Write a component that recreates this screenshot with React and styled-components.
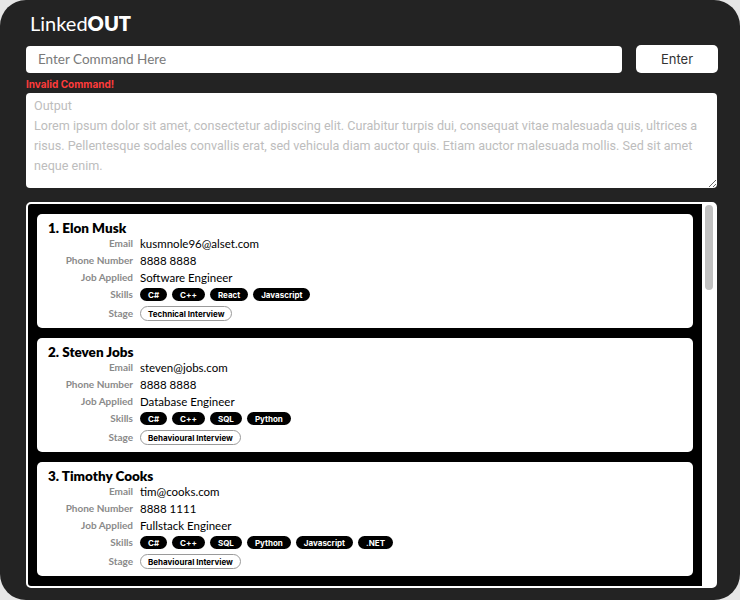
import React from 'react';
import styled, { createGlobalStyle } from 'styled-components';

const GlobalStyle = createGlobalStyle`
  html, body {
    margin: 0;
    padding: 0;
    background: #e6e6e6;
  }
  * {
    box-sizing: border-box;
  }
`;

const Window = styled.div`
  width: 740px;
  height: 600px;
  background-color: #232323;
  border-radius: 26px;
  padding: 12px 22px 12px 26px;
  display: flex;
  flex-direction: column;
  font-family: Lato, "Liberation Sans", sans-serif;
`;

const Title = styled.h1`
  margin: 0 0 11px 4px;
  font-size: 20px;
  line-height: 22px;
  font-weight: 400;
  color: #fff;
  b {
    font-weight: 800;
  }
`;

const CommandRow = styled.div`
  display: flex;
  gap: 14px;
  align-items: center;
`;

const CommandInput = styled.input`
  flex: 1;
  height: 27px;
  border: none;
  border-radius: 4px;
  padding: 0 12px;
  font-family: Lato, sans-serif;
  font-size: 13.5px;
  outline: none;
  &::placeholder {
    color: #7a7a7a;
  }
`;

const EnterButton = styled.button`
  width: 82px;
  height: 28px;
  border: none;
  border-radius: 5px;
  background: #fff;
  color: #333;
  font-family: Inter, sans-serif;
  font-size: 13px;
  cursor: pointer;
`;

const ErrorText = styled.div`
  color: #ff3b3b;
  font-family: Inter, sans-serif;
  font-weight: 700;
  font-size: 10px;
  line-height: 14px;
  margin: 4px 0 2px;
`;

const Output = styled.textarea`
  height: 95px;
  width: 691px;
  border: none;
  border-radius: 4px;
  padding: 3px 4px 3px 8px;
  font-family: Roboto, sans-serif;
  font-size: 12.6px;
  line-height: 20px;
  resize: vertical;
  outline: none;
  &::placeholder {
    color: #bdbdbd;
  }
`;

const ListFrame = styled.div`
  margin-top: 14px;
  flex: 1;
  width: 691px;
  min-height: 0;
  display: flex;
  border: 2px solid #fff;
  border-radius: 5px;
  background: #fff;
  overflow: hidden;
`;

const Viewport = styled.div`
  flex: 1;
  background: #000;
  overflow: hidden;
`;

const ScrollTrack = styled.div`
  width: 13px;
  padding: 1px 2px 0 3px;
  background: #fff;
`;

const ScrollThumb = styled.div`
  height: 85px;
  border-radius: 4px;
  background: #c1c1c1;
`;

const List = styled.div`
  display: flex;
  flex-direction: column;
  gap: 10px;
  padding: 10px 9px;
`;

const Card = styled.div`
  background: #fff;
  border-radius: 5px;
  padding: 6px 11px 7px;
`;

const Name = styled.div`
  font-weight: 800;
  font-size: 13.5px;
  line-height: 16px;
  color: #000;
`;

const Fields = styled.div`
  display: grid;
  grid-template-columns: 85px 1fr;
  column-gap: 7px;
  row-gap: 2px;
`;

const Label = styled.div`
  text-align: right;
  color: #8a8a8a;
  font-weight: 700;
  font-size: 10px;
  line-height: 15px;
  margin-top: ${p => (p.$extra ? '2px' : '0')};
`;

const Value = styled.div`
  font-size: 11.5px;
  line-height: 15px;
  color: #000;
`;

const Chips = styled.div`
  display: flex;
  gap: 5px;
  align-items: center;
  height: 15px;
  margin-top: ${p => (p.$extra ? '2px' : '0')};
`;

const Chip = styled.span`
  display: inline-flex;
  align-items: center;
  height: ${p => (p.$outline ? '15px' : '13px')};
  padding: 0 ${p => (p.$outline ? '7px' : '8px')};
  border-radius: 8px;
  font-family: Inter, sans-serif;
  font-weight: 700;
  font-size: 8px;
  background: ${p => (p.$outline ? '#fff' : '#000')};
  color: ${p => (p.$outline ? '#000' : '#fff')};
  border: ${p => (p.$outline ? '1px solid #9a9a9a' : 'none')};
`;

const applicants = [
  { name: 'Elon Musk', email: 'kusmnole96@alset.com', phone: '8888 8888', job: 'Software Engineer', skills: ['C#', 'C++', 'React', 'Javascript'], stage: 'Technical Interview' },
  { name: 'Steven Jobs', email: 'steven@jobs.com', phone: '8888 8888', job: 'Database Engineer', skills: ['C#', 'C++', 'SQL', 'Python'], stage: 'Behavioural Interview' },
  { name: 'Timothy Cooks', email: 'tim@cooks.com', phone: '8888 1111', job: 'Fullstack Engineer', skills: ['C#', 'C++', 'SQL', 'Python', 'Javascript', '.NET'], stage: 'Behavioural Interview' },
];

const placeholder =
  'Output\nLorem ipsum dolor sit amet, consectetur adipiscing elit. Curabitur turpis dui, consequat vitae malesuada quis, ultrices a risus. Pellentesque sodales convallis erat, sed vehicula diam auctor quis. Etiam auctor malesuada mollis. Sed sit amet neque enim.';

export default function App() {
  return (
    <>
      <GlobalStyle />
      <Window>
        <Title>Linked<b>OUT</b></Title>
        <CommandRow>
          <CommandInput placeholder="Enter Command Here" />
          <EnterButton>Enter</EnterButton>
        </CommandRow>
        <ErrorText>Invalid Command!</ErrorText>
        <Output placeholder={placeholder} />
        <ListFrame>
          <Viewport>
            <List>
              {applicants.map((a, i) => (
                <Card key={a.name}>
                  <Name>{i + 1}. {a.name}</Name>
                  <Fields>
                    <Label>Email</Label>
                    <Value>{a.email}</Value>
                    <Label>Phone Number</Label>
                    <Value>{a.phone}</Value>
                    <Label>Job Applied</Label>
                    <Value>{a.job}</Value>
                    <Label>Skills</Label>
                    <Chips>
                      {a.skills.map(s => <Chip key={s}>{s}</Chip>)}
                    </Chips>
                    <Label $extra>Stage</Label>
                    <Chips $extra>
                      <Chip $outline>{a.stage}</Chip>
                    </Chips>
                  </Fields>
                </Card>
              ))}
            </List>
          </Viewport>
          <ScrollTrack>
            <ScrollThumb />
          </ScrollTrack>
        </ListFrame>
      </Window>
    </>
  );
}
